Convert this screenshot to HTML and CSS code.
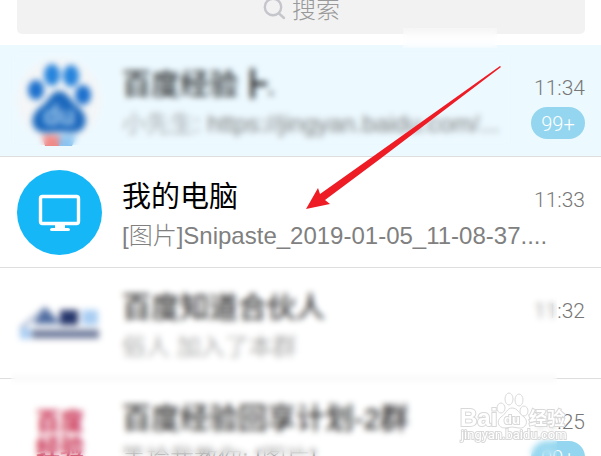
FILE: index.html
```
<!DOCTYPE html>
<html lang="zh-CN">

<head>
    <meta charset="utf-8">
    <meta name="viewport" content="width=device-width, initial-scale=1">
    <title>消息</title>
    <link rel="stylesheet" href="styles.css">
</head>

<body>

    <div class="screen">

        <header>
            <label class="search">
                <svg class="search-icon" viewBox="0 0 24 24" aria-hidden="true">
                    <circle cx="11" cy="10" r="8.200"></circle>
                    <path d="M17 16.500L22 21"></path>
                </svg>
                <input type="text" placeholder="搜索" aria-label="搜索">
            </label>
            <div class="blur blur-header"></div>
        </header>

        <main>
            <article class="chat pinned">
                <svg class="avatar" viewBox="0 0 85 85" aria-hidden="true">
                    <circle cx="42" cy="42" r="42" fill="#f4f6f7"></circle>
                    <g fill="#2583dc">
                        <ellipse cx="19" cy="32" rx="8" ry="10" fill="#1c70cd"></ellipse>
                        <ellipse cx="35" cy="17" rx="8" ry="11"></ellipse>
                        <ellipse cx="54" cy="18" rx="8" ry="11"></ellipse>
                        <ellipse cx="66" cy="37" rx="8" ry="10" fill="#1c70cd"></ellipse>
                    </g>
                    <path d="M42 33C50 33 53 42 60 48C68 54 71 62 67 69C62 77 53 74 42 74C31 74 22 77 17 69C13 62 17 53 25 48C32 43 34 33 42 33Z" fill="#1b68bd"></path>
                    <text x="42" y="67" class="paw-text" fill="#9cc5ea">du</text>
                    <path d="M25 77H42V88H28Z" fill="#f08a88"></path>
                    <path d="M42 77H60L55 88H42Z" fill="#8cc4f0"></path>
                </svg>
                <div class="content">
                    <h2>百度经验┣.</h2>
                    <p>小先生: https://jingyan.baidu.com/...</p>
                </div>
                <div class="meta">
                    <time>11:34</time>
                    <span class="badge">99+</span>
                </div>
                <div class="blur blur-chat"></div>
            </article>

            <article class="chat">
                <svg class="avatar" viewBox="0 0 85 85" aria-hidden="true">
                    <circle cx="42.500" cy="42.500" r="42.500" fill="#15b7f7"></circle>
                    <rect x="23.500" y="26.500" width="38" height="27" rx="2" fill="none" stroke="#fff" stroke-width="3.400"></rect>
                    <path d="M38 54H48V58H51Q53 58 53 59.500Q53 61 51 61H35Q33 61 33 59.500Q33 58 35 58H38Z" fill="#fff"></path>
                </svg>
                <div class="content">
                    <h2>我的电脑</h2>
                    <p>[图片]Snipaste_2019-01-05_11-08-37....</p>
                </div>
                <div class="meta">
                    <time>11:33</time>
                </div>
            </article>

            <div class="chat-group">
                <article class="chat">
                    <svg class="avatar" viewBox="0 0 85 85" aria-hidden="true">
                        <path d="M3 48L28 27L44 42" fill="none" stroke="#a3b1cc" stroke-width="3"></path>
                        <path d="M16 43L28 27L42 43Z" fill="#4f6ca0"></path>
                        <rect x="43" y="29" width="18" height="15" fill="#27376c"></rect>
                        <rect x="65" y="29" width="16" height="15" fill="#a9cdf2"></rect>
                        <rect x="3" y="47" width="11" height="11" fill="#a9cdf2"></rect>
                        <path d="M15 53H82" stroke="#74809f" stroke-width="9"></path>
                    </svg>
                    <div class="content">
                        <h2>百度知道合伙人</h2>
                        <p>俗人 加入了本群</p>
                    </div>
                    <div class="meta">
                        <time>11:32</time>
                    </div>
                </article>

                <article class="chat">
                    <svg class="avatar" viewBox="0 0 85 85" aria-hidden="true">
                        <text x="43" y="38" class="brand-text">百度</text>
                        <text x="43" y="64" class="brand-text">经验</text>
                    </svg>
                    <div class="content">
                        <h2>百度经验回享计划-2群</h2>
                        <p>等拾我教你: [图片]</p>
                    </div>
                    <div class="meta">
                        <time>11:25</time>
                        <span class="badge">99+</span>
                    </div>
                </article>
                <div class="blur blur-group"></div>
            </div>
        </main>

        <svg class="arrow" viewBox="0 0 195 144" aria-hidden="true">
            <path d="M0 143L12 122L14 128L69 89L194 0L195 1L74 93L19 134L24 138Z"></path>
        </svg>

        <svg class="watermark" viewBox="0 0 110 56">
            <g fill="#fff" stroke="#d9d9d9" stroke-width="1">
                <ellipse cx="43" cy="20" rx="4" ry="5"></ellipse>
                <ellipse cx="51" cy="11" rx="4" ry="6"></ellipse>
                <ellipse cx="61" cy="12" rx="4" ry="6"></ellipse>
                <ellipse cx="66" cy="23" rx="4" ry="5"></ellipse>
                <path d="M54 20C60 20 61 26 66 29C71 33 68 41 61 40Q54 38 47 40C40 40 38 33 43 29C48 26 49 20 54 20Z"></path>
            </g>
            <text x="2" y="38" class="mark-name">Bai</text>
            <text x="46" y="36" class="mark-du">du</text>
            <text x="71" y="37" class="mark-cn">经验</text>
            <text x="3" y="51" class="mark-url">jingyan.baidu.com</text>
        </svg>

    </div>
</body>

</html>
```
FILE: styles.css
```
* {
    box-sizing: border-box;
}

body {
    margin: 0;
    background-color: #fff;
    font-family: "Liberation Sans", "Noto Sans CJK SC", sans-serif;
    overflow: hidden;
}

.screen {
    position: relative;
    height: 100vh;
    overflow: hidden;
}

header {
    display: flex;
    align-items: flex-end;
    position: relative;
    height: 45px;
    padding: 0 16px 11px 17px;
}

/* the search box is scrolled partly off the top */
.search {
    flex: 1;
    display: flex;
    align-items: center;
    justify-content: center;
    gap: 6px;
    height: 50px;
    border-radius: 5px;
    background-color: #f2f2f2;
}

.search-icon {
    width: 24px;
    height: 24px;
    fill: none;
    stroke: #c5c5cc;
    stroke-width: 2.4;
    stroke-linecap: round;
}

.search input {
    width: 48px;
    padding: 0 0 4px;
    border: 0;
    outline: 0;
    background: none;
    font: 24px "Noto Sans CJK SC", sans-serif;
    font-weight: 300;
    color: #999;
}

.search input::placeholder {
    color: #999;
    opacity: 1;
}

.chat {
    display: flex;
    position: relative;
    height: 111px;
    padding: 0 16px 0 17px;
    border-bottom: 1px solid #dedede;
}

.pinned {
    height: 112px;
    background-color: #ecf9ff;
}

.avatar {
    flex: none;
    width: 85px;
    height: 85px;
    margin: 13px 20px 0 0;
    overflow: visible;
}

.content {
    flex: 1;
    min-width: 0;
    padding-top: 20px;
    white-space: nowrap;
}

.content h2,
.content p {
    margin: 0;
    line-height: 40px;
}

.content h2 {
    font-size: 29px;
    font-weight: 400;
    color: #000;
}

.content p {
    font-size: 24px;
    line-height: 38px;
    font-weight: 300;
    color: #808080;
}

.meta {
    display: flex;
    flex-direction: column;
    align-items: flex-end;
    gap: 7px;
    width: 54px;
    margin-left: -25px;
    padding-top: 31px;
    font-family: Roboto, sans-serif;
}

time {
    font-size: 21px;
    line-height: 24px;
    font-weight: 300;
    color: #777;
}

.badge {
    width: 54px;
    height: 32px;
    border-radius: 16px;
    background-color: #94d6ef;
    color: #fff;
    font-size: 20px;
    font-weight: 300;
    line-height: 35px;
    text-align: center;
}

.chat-group {
    position: relative;
}

/* blurred patches that hide private names */
.blur {
    position: absolute;
    backdrop-filter: blur(3px);
}

.blur-header {
    top: 28px;
    right: 104px;
    width: 94px;
    height: 20px;
    z-index: 1;
    background-color: rgba(255, 255, 255, 0.3);
}

.blur-chat {
    top: 6px;
    right: 90px;
    bottom: 11px;
    left: 11px;
}

.blur-group {
    top: 6px;
    right: 44px;
    bottom: 0;
    left: 11px;
}

.arrow {
    position: absolute;
    top: 66px;
    left: 306px;
    width: 195px;
    height: 144px;
    fill: #ee1c25;
}

.watermark {
    position: absolute;
    right: 33px;
    bottom: 12px;
    width: 110px;
    height: 56px;
}

.paw-text {
    font: bold 28px Roboto, sans-serif;
    text-anchor: middle;
}

.brand-text {
    font: bold 24px "Noto Sans CJK SC", sans-serif;
    text-anchor: middle;
    fill: #c8294d;
}

.watermark text {
    fill: #fff;
    stroke: #d9d9d9;
    stroke-width: 2;
    paint-order: stroke;
}

.watermark .mark-name {
    font: bold 24px "Liberation Sans", sans-serif;
}

.watermark .mark-du {
    font: bold 13px "Liberation Sans", sans-serif;
}

.watermark .mark-cn {
    font: bold 18px "Noto Sans CJK SC", sans-serif;
}

.watermark .mark-url {
    font: 13px Roboto, sans-serif;
}
```
